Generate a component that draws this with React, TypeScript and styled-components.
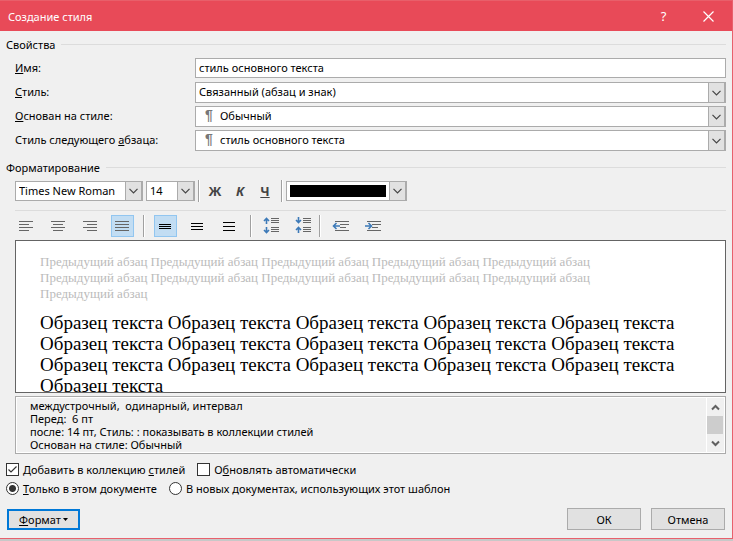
import React from "react";
import styled, { createGlobalStyle, css } from "styled-components";

const Global = createGlobalStyle`
  * { box-sizing: border-box; }
  body {
    margin: 0;
    background: #c8c8c8;
    font: 11px/13px "Noto Sans", "Open Sans", sans-serif;
    color: #000;
  }
  button, input, select { font: inherit; color: inherit; margin: 0; }
`;

const Dialog = styled.main`
  background: #f0f0f0;
  border-right: 1px solid #e8606c;
  border-bottom: 1px solid #e8606c;
`;

const TitleBar = styled.header`
  display: flex;
  align-items: center;
  height: 31px;
  padding: 0 1px 0 8px;
  background: #e84a58;
  border-top: 1px solid #e85f6a;
  color: #fff;
`;

const Title = styled.h1`
  flex: 1;
  margin: 0;
  font-size: 11px;
  font-weight: 400;
`;

const CaptionButton = styled.button`
  width: 45px;
  height: 30px;
  padding: 0;
  border: 0;
  background: none;
  display: grid;
  place-items: center;
  font-size: 13px;
`;

const Content = styled.form`
  display: flex;
  flex-direction: column;
  padding: 6px 6px 8px;
`;

const SectionTitle = styled.h2`
  display: flex;
  align-items: center;
  gap: 6px;
  margin: 0;
  height: 14px;
  font-size: 11px;
  font-weight: 400;
  &::after {
    content: "";
    flex: 1;
    height: 1px;
    background: #dcdcdc;
  }
`;

const Properties = styled.div`
  display: grid;
  grid-template-columns: 180px 1fr;
  grid-auto-rows: 21px;
  row-gap: 3px;
  margin: 7px 0 9px 9px;
`;

const Label = styled.label`
  line-height: 20px;
`;

const boxed = css`
  border: 1px solid #ababab;
  border-radius: 0;
  background: #fff;
  outline: none;
`;

const TextInput = styled.input`
  ${boxed}
  width: 100%;
  height: 20px;
  padding: 0 3px 1px;
`;

const Combo = styled.div<{ $width?: number; $tall?: boolean }>`
  position: relative;
  width: ${(p) => (p.$width ? `${p.$width}px` : "auto")};
  height: ${(p) => (p.$tall ? 21 : 20)}px;
`;

const Select = styled.select<{ $indent?: boolean }>`
  ${boxed}
  appearance: none;
  display: block;
  width: 100%;
  height: 100%;
  padding: 0 18px 2px ${(p) => (p.$indent ? 24 : 3)}px;
`;

const Arrow = styled.span`
  position: absolute;
  top: 0;
  right: 0;
  bottom: 0;
  width: 18px;
  display: grid;
  place-items: center;
  border: 1px solid #ababab;
  border-right-width: 2px;
  background: #e1e1e1;
  pointer-events: none;
`;

const Pilcrow = styled.span`
  position: absolute;
  left: 10px;
  top: 3px;
  color: #777;
  font-family: "Liberation Sans", sans-serif;
  font-size: 14px;
  font-weight: 700;
  pointer-events: none;
`;

const Swatch = styled.span`
  position: absolute;
  inset: 4px 21px 4px 4px;
  background: #000;
  pointer-events: none;
`;

const FontRow = styled.div`
  display: flex;
  align-items: center;
  gap: 3px;
  height: 22px;
  margin: 6px 0 8px 9px;
`;

const Separator = styled.span`
  width: 2px;
  height: 22px;
  background: #a0a0a0;
  border-right: 1px solid #fff;
`;

const LetterGroup = styled.div`
  display: flex;
  flex: none;
  gap: 1px;
  width: 75px;
`;

const LetterButton = styled.button<{ $italic?: boolean }>`
  width: 24px;
  height: 22px;
  padding: 0;
  border: 0;
  background: none;
  color: #444;
  font-size: 13px;
  font-weight: 700;
  font-style: ${(p) => (p.$italic ? "italic" : "normal")};
`;

const ParagraphRow = styled.div`
  display: flex;
  align-items: center;
  margin-left: 9px;
  padding: 4px 0 3px;
  border-top: 1px solid #dcdcdc;
`;

const IconGroup = styled.div<{ $tight?: boolean }>`
  display: flex;
  gap: 9px;
  margin-right: ${(p) => (p.$tight ? 3 : 9)}px;
  span + & { margin-left: 9px; }
`;

const IconButton = styled.button<{ $active?: boolean }>`
  width: 23px;
  height: 22px;
  padding: 0;
  display: grid;
  place-items: center;
  border: 1px solid ${(p) => (p.$active ? "#92c6f0" : "transparent")};
  background: ${(p) => (p.$active ? "#c2ddf3" : "none")};
`;

const Preview = styled.section`
  height: 153px;
  margin-left: 9px;
  padding: 13px 24px 0;
  overflow: hidden;
  border: 1px solid #646464;
  background: #fff;
  font-family: "Liberation Serif", serif;
`;

const Previous = styled.p`
  margin: 0 0 10px;
  padding-right: 60px;
  color: #bbb;
  font-size: 13px;
  line-height: 16px;
`;

const Sample = styled.p`
  margin: 0;
  font-size: 19px;
  line-height: 21px;
`;

const Description = styled.section`
  display: flex;
  height: 58px;
  margin: 3px 0 9px 9px;
  padding: 1px;
  border: 1px solid #ababab;
  background: #fff;
`;

const DescriptionText = styled.p`
  flex: 1;
  margin: 0;
  padding: 1px 13px 0;
  background: #f0f0f0;
  white-space: pre-wrap;
`;

const ScrollBar = styled.div`
  display: flex;
  flex-direction: column;
  width: 17px;
  margin-left: 1px;
  background: #f0f0f0;
`;

const ScrollArrow = styled.button`
  height: 18px;
  padding: 0;
  border: 0;
  background: none;
  display: grid;
  place-items: center;
`;

const Thumb = styled.span`
  flex: 1;
  margin-right: 1px;
  background: #cdcdcd;
`;

const Choices = styled.div`
  display: flex;
  gap: 12px;
  height: 19px;
`;

const Choice = styled.label`
  display: flex;
  align-items: center;
  gap: 4px;
  height: 13px;
`;

const Tick = styled.input`
  appearance: none;
  width: 13px;
  height: 13px;
  border: 1px solid #333;
  background: #fff;
  &[type="radio"] { border-radius: 50%; }
  &[type="radio"]:checked {
    background: radial-gradient(circle, #333 3px, #fff 4px);
  }
  &[type="checkbox"]:checked {
    background: #fff url("data:image/svg+xml,%3Csvg xmlns='http://www.w3.org/2000/svg' viewBox='0 0 11 11'%3E%3Cpath d='M1.5 5.5l2.5 2.5 5.5-5.5' fill='none' stroke='%23333' stroke-width='1.2'/%3E%3C/svg%3E");
  }
`;

const Footer = styled.footer`
  display: flex;
  gap: 10px;
  align-items: center;
  margin: 7px 1px 0;
`;

const PushButton = styled.button<{ $focused?: boolean }>`
  width: ${(p) => (p.$focused ? 73 : 74)}px;
  height: ${(p) => (p.$focused ? 21 : 22)}px;
  margin-right: ${(p) => (p.$focused ? "auto" : 0)};
  padding: 0;
  display: flex;
  align-items: center;
  justify-content: center;
  gap: 2px;
  border: ${(p) => (p.$focused ? "2px solid #0078d7" : "1px solid #ababab")};
  background: #e1e1e1;
`;

const Chevron = () => (
  <svg width="9" height="6" viewBox="0 0 9 6" fill="none" stroke="#444" strokeWidth="1.2">
    <path d="M.5 .8l4 4 4-4" />
  </svg>
);

const ComboArrow = () => (
  <Arrow>
    <Chevron />
  </Arrow>
);

type Line = [number, number, number];

const Lines = ({ lines, color = "#666", children }: { lines: Line[]; color?: string; children?: React.ReactNode }) => (
  <svg width="19" height="18" viewBox="0 0 19 18" shapeRendering="crispEdges">
    {lines.map(([x, y, w]) => (
      <rect key={`${x}-${y}`} x={x} y={y} width={w} height="1" fill={color} />
    ))}
    {children}
  </svg>
);

const aligns: { name: string; lines: Line[]; active?: boolean }[] = [
  { name: "По левому краю", lines: [[2, 4, 14], [2, 7, 10], [2, 10, 14], [2, 13, 10]] },
  { name: "По центру", lines: [[2, 4, 14], [4, 7, 10], [2, 10, 14], [4, 13, 10]] },
  { name: "По правому краю", lines: [[2, 4, 14], [6, 7, 10], [2, 10, 14], [6, 13, 10]] },
  { name: "По ширине", lines: [[2, 4, 14], [2, 7, 14], [2, 10, 14], [2, 13, 14]], active: true },
];

const spacings: { name: string; lines: Line[]; active?: boolean }[] = [
  { name: "Одинарный интервал", lines: [[3, 7, 12], [3, 9, 12], [3, 11, 12]], active: true },
  { name: "Полуторный интервал", lines: [[3, 6, 12], [3, 9, 12], [3, 12, 12]] },
  { name: "Двойной интервал", lines: [[3, 5, 12], [3, 9, 12], [3, 13, 12]] },
];

const gapLines: Line[] = [[8, 1, 8], [8, 3, 8], [8, 5, 8], [8, 10, 8], [8, 12, 8], [8, 14, 8]];

const indentLines: Line[] = [[3, 4, 14], [8, 7, 9], [8, 10, 6], [3, 13, 14]];

const BlueArrow = ({ d }: { d: string }) => (
  <path d={d} fill="none" stroke="#3d7ab8" strokeWidth="1.6" shapeRendering="auto" />
);

const previous = Array(11).fill("Предыдущий абзац").join(" ");
const sample = Array(16).fill("Образец текста").join(" ");

export default function App() {
  return (
    <>
      <Global />
      <Dialog>
        <TitleBar>
          <Title>Создание стиля</Title>
          <CaptionButton type="button" aria-label="Справка">?</CaptionButton>
          <CaptionButton type="button" aria-label="Закрыть">
            <svg width="11" height="11" viewBox="0 0 11 11" stroke="#fff" strokeWidth="1.2">
              <path d="M.5 .5l10 10M10.5 .5l-10 10" />
            </svg>
          </CaptionButton>
        </TitleBar>
        <Content onSubmit={(e) => e.preventDefault()}>
          <SectionTitle>Свойства</SectionTitle>
          <Properties>
            <Label htmlFor="name"><u>И</u>мя:</Label>
            <TextInput id="name" defaultValue="стиль основного текста" />
            <Label htmlFor="kind"><u>С</u>тиль:</Label>
            <Combo $tall>
              <Select id="kind"><option>Связанный (абзац и знак)</option></Select>
              <ComboArrow />
            </Combo>
            <Label htmlFor="base"><u>О</u>снован на стиле:</Label>
            <Combo $tall>
              <Select id="base" $indent><option>Обычный</option></Select>
              <Pilcrow>¶</Pilcrow>
              <ComboArrow />
            </Combo>
            <Label htmlFor="next">Стиль следующего <u>а</u>бзаца:</Label>
            <Combo $tall>
              <Select id="next" $indent><option>стиль основного текста</option></Select>
              <Pilcrow>¶</Pilcrow>
              <ComboArrow />
            </Combo>
          </Properties>
          <SectionTitle>Форматирование</SectionTitle>
          <FontRow>
            <Combo $width={128}>
              <Select aria-label="Шрифт"><option>Times New Roman</option></Select>
              <ComboArrow />
            </Combo>
            <Combo $width={49}>
              <Select aria-label="Размер шрифта"><option>14</option></Select>
              <ComboArrow />
            </Combo>
            <Separator />
            <LetterGroup>
              <LetterButton type="button">Ж</LetterButton>
              <LetterButton type="button" $italic>К</LetterButton>
              <LetterButton type="button"><u>Ч</u></LetterButton>
            </LetterGroup>
            <Separator />
            <Combo $width={121}>
              <Select aria-label="Цвет текста"><option aria-label="Чёрный" /></Select>
              <Swatch />
              <ComboArrow />
            </Combo>
          </FontRow>
          <ParagraphRow>
            <IconGroup>
              {aligns.map((a) => (
                <IconButton key={a.name} type="button" aria-label={a.name} $active={a.active}>
                  <Lines lines={a.lines} />
                </IconButton>
              ))}
            </IconGroup>
            <Separator />
            <IconGroup>
              {spacings.map((s) => (
                <IconButton key={s.name} type="button" aria-label={s.name} $active={s.active}>
                  <Lines lines={s.lines} color="#000" />
                </IconButton>
              ))}
            </IconGroup>
            <Separator />
            <IconGroup $tight>
              <IconButton type="button" aria-label="Увеличить интервал">
                <Lines lines={gapLines}>
                  <BlueArrow d="M3.500 7V1M1 4L3.500 1.500L6 4M3.500 10V16M1 13L3.500 15.500L6 13" />
                </Lines>
              </IconButton>
              <IconButton type="button" aria-label="Уменьшить интервал">
                <Lines lines={gapLines}>
                  <BlueArrow d="M3.500 0V6M1 3L3.500 5.500L6 3M3.500 16V10M1 13L3.500 10.500L6 13" />
                </Lines>
              </IconButton>
            </IconGroup>
            <Separator />
            <IconGroup>
              <IconButton type="button" aria-label="Уменьшить отступ">
                <Lines lines={indentLines}>
                  <BlueArrow d="M8 9H2M4.500 6L1.500 9L4.500 12" />
                </Lines>
              </IconButton>
              <IconButton type="button" aria-label="Увеличить отступ">
                <Lines lines={indentLines}>
                  <BlueArrow d="M1 9H7M4.500 6L7.500 9L4.500 12" />
                </Lines>
              </IconButton>
            </IconGroup>
          </ParagraphRow>
          <Preview>
            <Previous>{previous}</Previous>
            <Sample>{sample}</Sample>
          </Preview>
          <Description>
            <DescriptionText>
              {"междустрочный,  одинарный, интервал\nПеред:  6 пт\nпосле: 14 пт, Стиль: : показывать в коллекции стилей\nОснован на стиле: Обычный"}
            </DescriptionText>
            <ScrollBar>
              <ScrollArrow type="button" aria-label="Вверх">
                <svg width="9" height="7" viewBox="0 0 9 7" fill="none" stroke="#606060" strokeWidth="2"><path d="M1 5.5L4.5 2L8 5.5" /></svg>
              </ScrollArrow>
              <Thumb />
              <ScrollArrow type="button" aria-label="Вниз">
                <svg width="9" height="7" viewBox="0 0 9 7" fill="none" stroke="#606060" strokeWidth="2"><path d="M1 1.5L4.5 5L8 1.5" /></svg>
              </ScrollArrow>
            </ScrollBar>
          </Description>
          <Choices>
            <Choice><Tick type="checkbox" defaultChecked /><span>Добавить в коллекцию <u>с</u>тилей</span></Choice>
            <Choice><Tick type="checkbox" /><span>О<u>б</u>новлять автоматически</span></Choice>
          </Choices>
          <Choices>
            <Choice><Tick type="radio" name="scope" defaultChecked /><span><u>Т</u>олько в этом документе</span></Choice>
            <Choice><Tick type="radio" name="scope" /><span>В новых документах, использующих этот шаблон</span></Choice>
          </Choices>
          <Footer>
            <PushButton type="button" $focused>
              <span><u>Ф</u>ормат</span>
              <svg width="5" height="3" viewBox="0 0 5 3"><path d="M0 0h5L2.5 3z" /></svg>
            </PushButton>
            <PushButton type="submit">ОК</PushButton>
            <PushButton type="button">Отмена</PushButton>
          </Footer>
        </Content>
      </Dialog>
    </>
  );
}
